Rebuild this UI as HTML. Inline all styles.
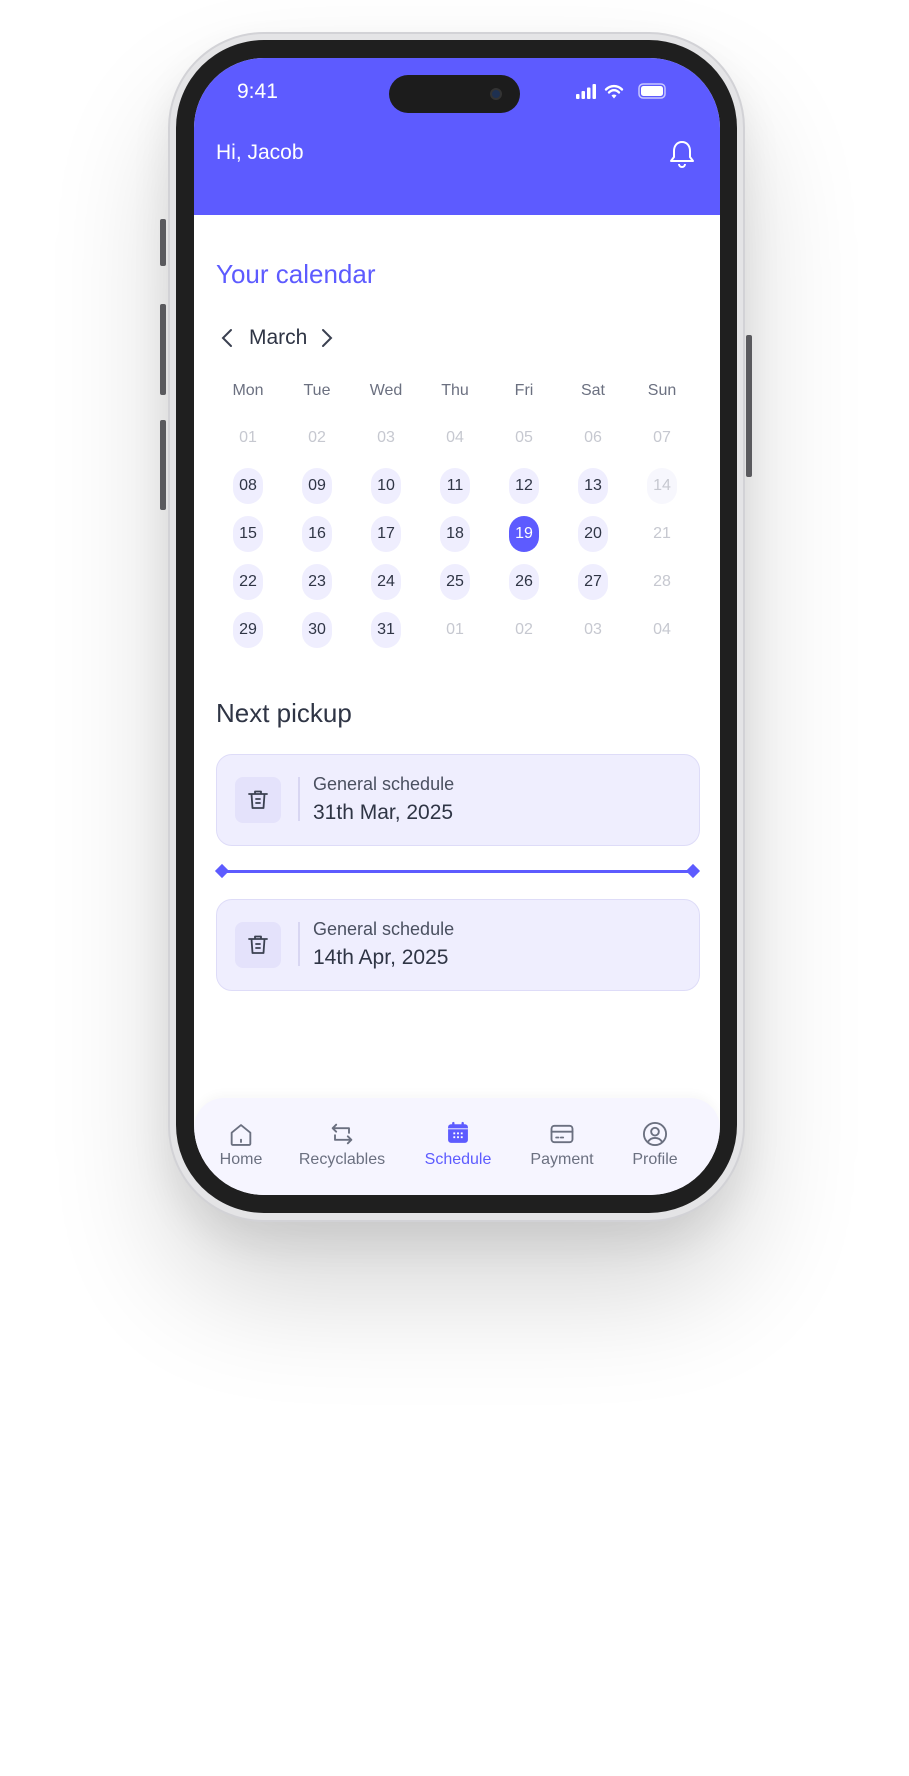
<!DOCTYPE html>
<html><head><meta charset="utf-8"><style>
*{margin:0;padding:0;box-sizing:border-box}
body{width:909px;height:1776px;background:#fff;position:relative;overflow:hidden;font-family:"Liberation Sans",sans-serif}
.abs{position:absolute}
.frame{left:168px;top:32px;width:577px;height:1190px;border-radius:96px;background:#e4e4e6;border:2px solid #d2d2d6;box-shadow:0 70px 120px rgba(0,0,0,0.16),0 20px 40px rgba(0,0,0,0.08)}
.bezel{left:176px;top:40px;width:561px;height:1173px;border-radius:88px;background:#1f1f1f}
.screen{left:194px;top:58px;width:526px;height:1137px;border-radius:70px;background:#fff;overflow:hidden}
.btn{background:#5a5a5e;border-radius:2px}
.day{position:absolute;width:30px;height:36px;margin-left:-15px;margin-top:-18px;border-radius:15px;text-align:center;line-height:36px;font-size:16px;color:#2f3545}
.p{background:#efeefe}
.g{color:#c6c8d0}
.hd{position:absolute;font-size:16px;color:#6b7080;width:60px;margin-left:-30px;text-align:center}
.card{position:absolute;left:22px;width:484px;height:92px;border:1.5px solid #dedcf8;background:#efeefe;border-radius:16px}
.ib{position:absolute;left:18px;top:22px;width:46px;height:46px;border-radius:8px;background:#e4e2fb}
.nav{position:absolute;font-size:16px;color:#6b7080;text-align:center;width:120px;margin-left:-60px}
</style></head><body>
<div class="abs frame"></div>
<div class="abs btn" style="left:160px;top:219px;width:6px;height:47px"></div>
<div class="abs btn" style="left:160px;top:304px;width:6px;height:91px"></div>
<div class="abs btn" style="left:160px;top:420px;width:6px;height:90px"></div>
<div class="abs btn" style="left:746px;top:335px;width:6px;height:142px"></div>
<div class="abs bezel"></div>
<div class="abs screen">
 <div class="abs" style="left:0;top:0;width:526px;height:157px;background:#5d5bff"></div>
 <div class="abs" style="left:43px;top:22px;color:#fff;font-size:21px">9:41</div>
 <div class="abs" style="left:195px;top:17px;width:131px;height:38px;border-radius:19px;background:#1c1c1c"></div>
 <div class="abs" style="left:296px;top:30px;width:12px;height:12px;border-radius:6px;background:#1e3050;border:2px solid #333"></div>
 <svg class="abs" style="left:382px;top:24px" width="90" height="20" viewBox="0 0 90 20">
  <rect x="0" y="12" width="3.5" height="5" rx="1" fill="#fff"/><rect x="5.5" y="9" width="3.5" height="8" rx="1" fill="#fff"/><rect x="11" y="5.5" width="3.5" height="11.5" rx="1" fill="#fff"/><rect x="16.5" y="2" width="3.5" height="15" rx="1" fill="#fff"/>
  <path d="M30 7.5a11 11 0 0 1 16 0M33 10.5a6.5 6.5 0 0 1 10 0" stroke="#fff" stroke-width="2.4" fill="none" stroke-linecap="round"/><path d="M35.5 13.5l2.5 3 2.5-3a3.5 3.5 0 0 0-5 0z" fill="#fff"/>
  <rect x="63" y="2" width="26" height="14" rx="4" fill="none" stroke="#c8c8ff" stroke-width="1.5"/><rect x="65" y="4" width="22" height="10" rx="2.5" fill="#fff"/>
 </svg>
 <div class="abs" style="left:22px;top:83px;color:#fff;font-size:21px">Hi, Jacob</div>
 <svg class="abs" style="left:474px;top:81px" width="28" height="30" viewBox="0 0 28 30" fill="none" stroke="#fff" stroke-width="2" stroke-linejoin="round"><path d="M14 3c-5 0-8 4-8 9v6l-3 4h22l-3-4v-6c0-5-3-9-8-9z"/><path d="M11 25a3 3 0 0 0 6 0"/></svg>
 <div class="abs" style="left:22px;top:201px;color:#5d5bff;font-size:26px">Your calendar</div>
 <svg class="abs" style="left:26px;top:270px" width="14" height="20" viewBox="0 0 14 20" fill="none" stroke="#3a4050" stroke-width="2" stroke-linecap="round"><path d="M11 2L3 10l8 8"/></svg>
 <div class="abs" style="left:55px;top:268px;color:#2f3545;font-size:21px">March</div>
 <svg class="abs" style="left:126px;top:270px" width="14" height="20" viewBox="0 0 14 20" fill="none" stroke="#3a4050" stroke-width="2" stroke-linecap="round"><path d="M3 2l8 8-8 8"/></svg>
 <div class="hd" style="left:54px;top:324px">Mon</div><div class="hd" style="left:123px;top:324px">Tue</div><div class="hd" style="left:192px;top:324px">Wed</div><div class="hd" style="left:261px;top:324px">Thu</div><div class="hd" style="left:330px;top:324px">Fri</div><div class="hd" style="left:399px;top:324px">Sat</div><div class="hd" style="left:468px;top:324px">Sun</div>
 <div style="position:absolute;left:0;top:0">
 <div class="day g" style="left:54px;top:380px">01</div><div class="day g" style="left:123px;top:380px">02</div><div class="day g" style="left:192px;top:380px">03</div><div class="day g" style="left:261px;top:380px">04</div><div class="day g" style="left:330px;top:380px">05</div><div class="day g" style="left:399px;top:380px">06</div><div class="day g" style="left:468px;top:380px">07</div>
 <div class="day p" style="left:54px;top:428px">08</div><div class="day p" style="left:123px;top:428px">09</div><div class="day p" style="left:192px;top:428px">10</div><div class="day p" style="left:261px;top:428px">11</div><div class="day p" style="left:330px;top:428px">12</div><div class="day p" style="left:399px;top:428px">13</div><div class="day g" style="left:468px;top:428px;background:#f7f7fd">14</div>
 <div class="day p" style="left:54px;top:476px">15</div><div class="day p" style="left:123px;top:476px">16</div><div class="day p" style="left:192px;top:476px">17</div><div class="day p" style="left:261px;top:476px">18</div><div class="day" style="left:330px;top:476px;background:#5d5bff;color:#fff">19</div><div class="day p" style="left:399px;top:476px">20</div><div class="day g" style="left:468px;top:476px">21</div>
 <div class="day p" style="left:54px;top:524px">22</div><div class="day p" style="left:123px;top:524px">23</div><div class="day p" style="left:192px;top:524px">24</div><div class="day p" style="left:261px;top:524px">25</div><div class="day p" style="left:330px;top:524px">26</div><div class="day p" style="left:399px;top:524px">27</div><div class="day g" style="left:468px;top:524px">28</div>
 <div class="day p" style="left:54px;top:572px">29</div><div class="day p" style="left:123px;top:572px">30</div><div class="day p" style="left:192px;top:572px">31</div><div class="day g" style="left:261px;top:572px">01</div><div class="day g" style="left:330px;top:572px">02</div><div class="day g" style="left:399px;top:572px">03</div><div class="day g" style="left:468px;top:572px">04</div>
 </div>
 <div class="abs" style="left:22px;top:640px;color:#2f3545;font-size:26px">Next pickup</div>
 <div class="card" style="top:696px"><div class="ib"></div>
  <svg class="abs" style="left:29px;top:33px" width="24" height="24" viewBox="0 0 24 24" fill="none" stroke="#3a4050" stroke-width="1.8" stroke-linecap="round" stroke-linejoin="round"><path d="M3 6h18M9 6V3.5h6V6M5.5 6l1 14h11l1-14M10 11h4M10 15h4"/></svg>
  <div class="abs" style="left:81px;top:22px;width:1.5px;height:44px;background:#d8d6f2"></div>
  <div class="abs" style="left:96px;top:19px;font-size:18px;color:#4a5060">General schedule</div>
  <div class="abs" style="left:96px;top:46px;font-size:21px;color:#2f3545">31th Mar, 2025</div></div>
 <div class="abs" style="left:28px;top:812px;width:471px;height:3px;background:#5d5bff"></div>
 <div class="abs" style="left:23px;top:808px;width:10px;height:10px;background:#5d5bff;transform:rotate(45deg)"></div>
 <div class="abs" style="left:494px;top:808px;width:10px;height:10px;background:#5d5bff;transform:rotate(45deg)"></div>
 <div class="card" style="top:841px"><div class="ib"></div>
  <svg class="abs" style="left:29px;top:33px" width="24" height="24" viewBox="0 0 24 24" fill="none" stroke="#3a4050" stroke-width="1.8" stroke-linecap="round" stroke-linejoin="round"><path d="M3 6h18M9 6V3.5h6V6M5.5 6l1 14h11l1-14M10 11h4M10 15h4"/></svg>
  <div class="abs" style="left:81px;top:22px;width:1.5px;height:44px;background:#d8d6f2"></div>
  <div class="abs" style="left:96px;top:19px;font-size:18px;color:#4a5060">General schedule</div>
  <div class="abs" style="left:96px;top:46px;font-size:21px;color:#2f3545">14th Apr, 2025</div></div>
 <div class="abs" style="left:0;top:1040px;width:526px;height:110px;background:#f6f5ff;border-radius:30px 30px 0 0;box-shadow:0 -4px 10px rgba(0,0,0,0.03)"></div>
 <svg class="abs" style="left:33px;top:1063px" width="28" height="28" viewBox="0 0 24 24" fill="none" stroke="#6b7080" stroke-width="1.6" stroke-linejoin="round"><path d="M4 10l8-6.5 8 6.5v9.5a1 1 0 0 1-1 1H5a1 1 0 0 1-1-1z"/><path d="M12 16v2" stroke-linecap="round"/></svg>
 <svg class="abs" style="left:134px;top:1062px" width="28" height="28" viewBox="0 0 24 24" fill="none" stroke="#6b7080" stroke-width="1.6" stroke-linecap="round" stroke-linejoin="round"><path d="M7 4L4 7l3 3M4 7h14v4M17 20l3-3-3-3M20 17H6v-4"/></svg>
 <svg class="abs" style="left:250px;top:1061px" width="28" height="28" viewBox="0 0 24 24"><rect x="3.5" y="4.5" width="17" height="16" rx="2.5" fill="#5d5bff"/><rect x="7" y="2.5" width="2" height="4" rx="1" fill="#5d5bff"/><rect x="15" y="2.5" width="2" height="4" rx="1" fill="#5d5bff"/><rect x="3.5" y="8" width="17" height="0.8" fill="#f6f5ff"/><g fill="#fff"><rect x="8" y="11.5" width="1.6" height="1.6"/><rect x="11.2" y="11.5" width="1.6" height="1.6"/><rect x="14.4" y="11.5" width="1.6" height="1.6"/><rect x="8" y="14.8" width="1.6" height="1.6"/><rect x="11.2" y="14.8" width="1.6" height="1.6"/><rect x="14.4" y="14.8" width="1.6" height="1.6"/></g></svg>
 <svg class="abs" style="left:354px;top:1062px" width="28" height="28" viewBox="0 0 24 24" fill="none" stroke="#6b7080" stroke-width="1.6" stroke-linecap="round"><rect x="3" y="5" width="18" height="14" rx="2.5"/><path d="M3 10h18M7 15h2M11 15h2"/></svg>
 <svg class="abs" style="left:447px;top:1062px" width="28" height="28" viewBox="0 0 24 24" fill="none" stroke="#6b7080" stroke-width="1.6"><circle cx="12" cy="12" r="9.5"/><circle cx="12" cy="10" r="3.3"/><path d="M5.8 19c1.5-2.5 3.6-3.6 6.2-3.6s4.7 1.1 6.2 3.6"/></svg>
 <div class="nav" style="left:47px;top:1093px">Home</div>
 <div class="nav" style="left:148px;top:1093px">Recyclables</div>
 <div class="nav" style="left:264px;top:1093px;color:#5d5bff">Schedule</div>
 <div class="nav" style="left:368px;top:1093px">Payment</div>
 <div class="nav" style="left:461px;top:1093px">Profile</div>
</div>
</body></html>
